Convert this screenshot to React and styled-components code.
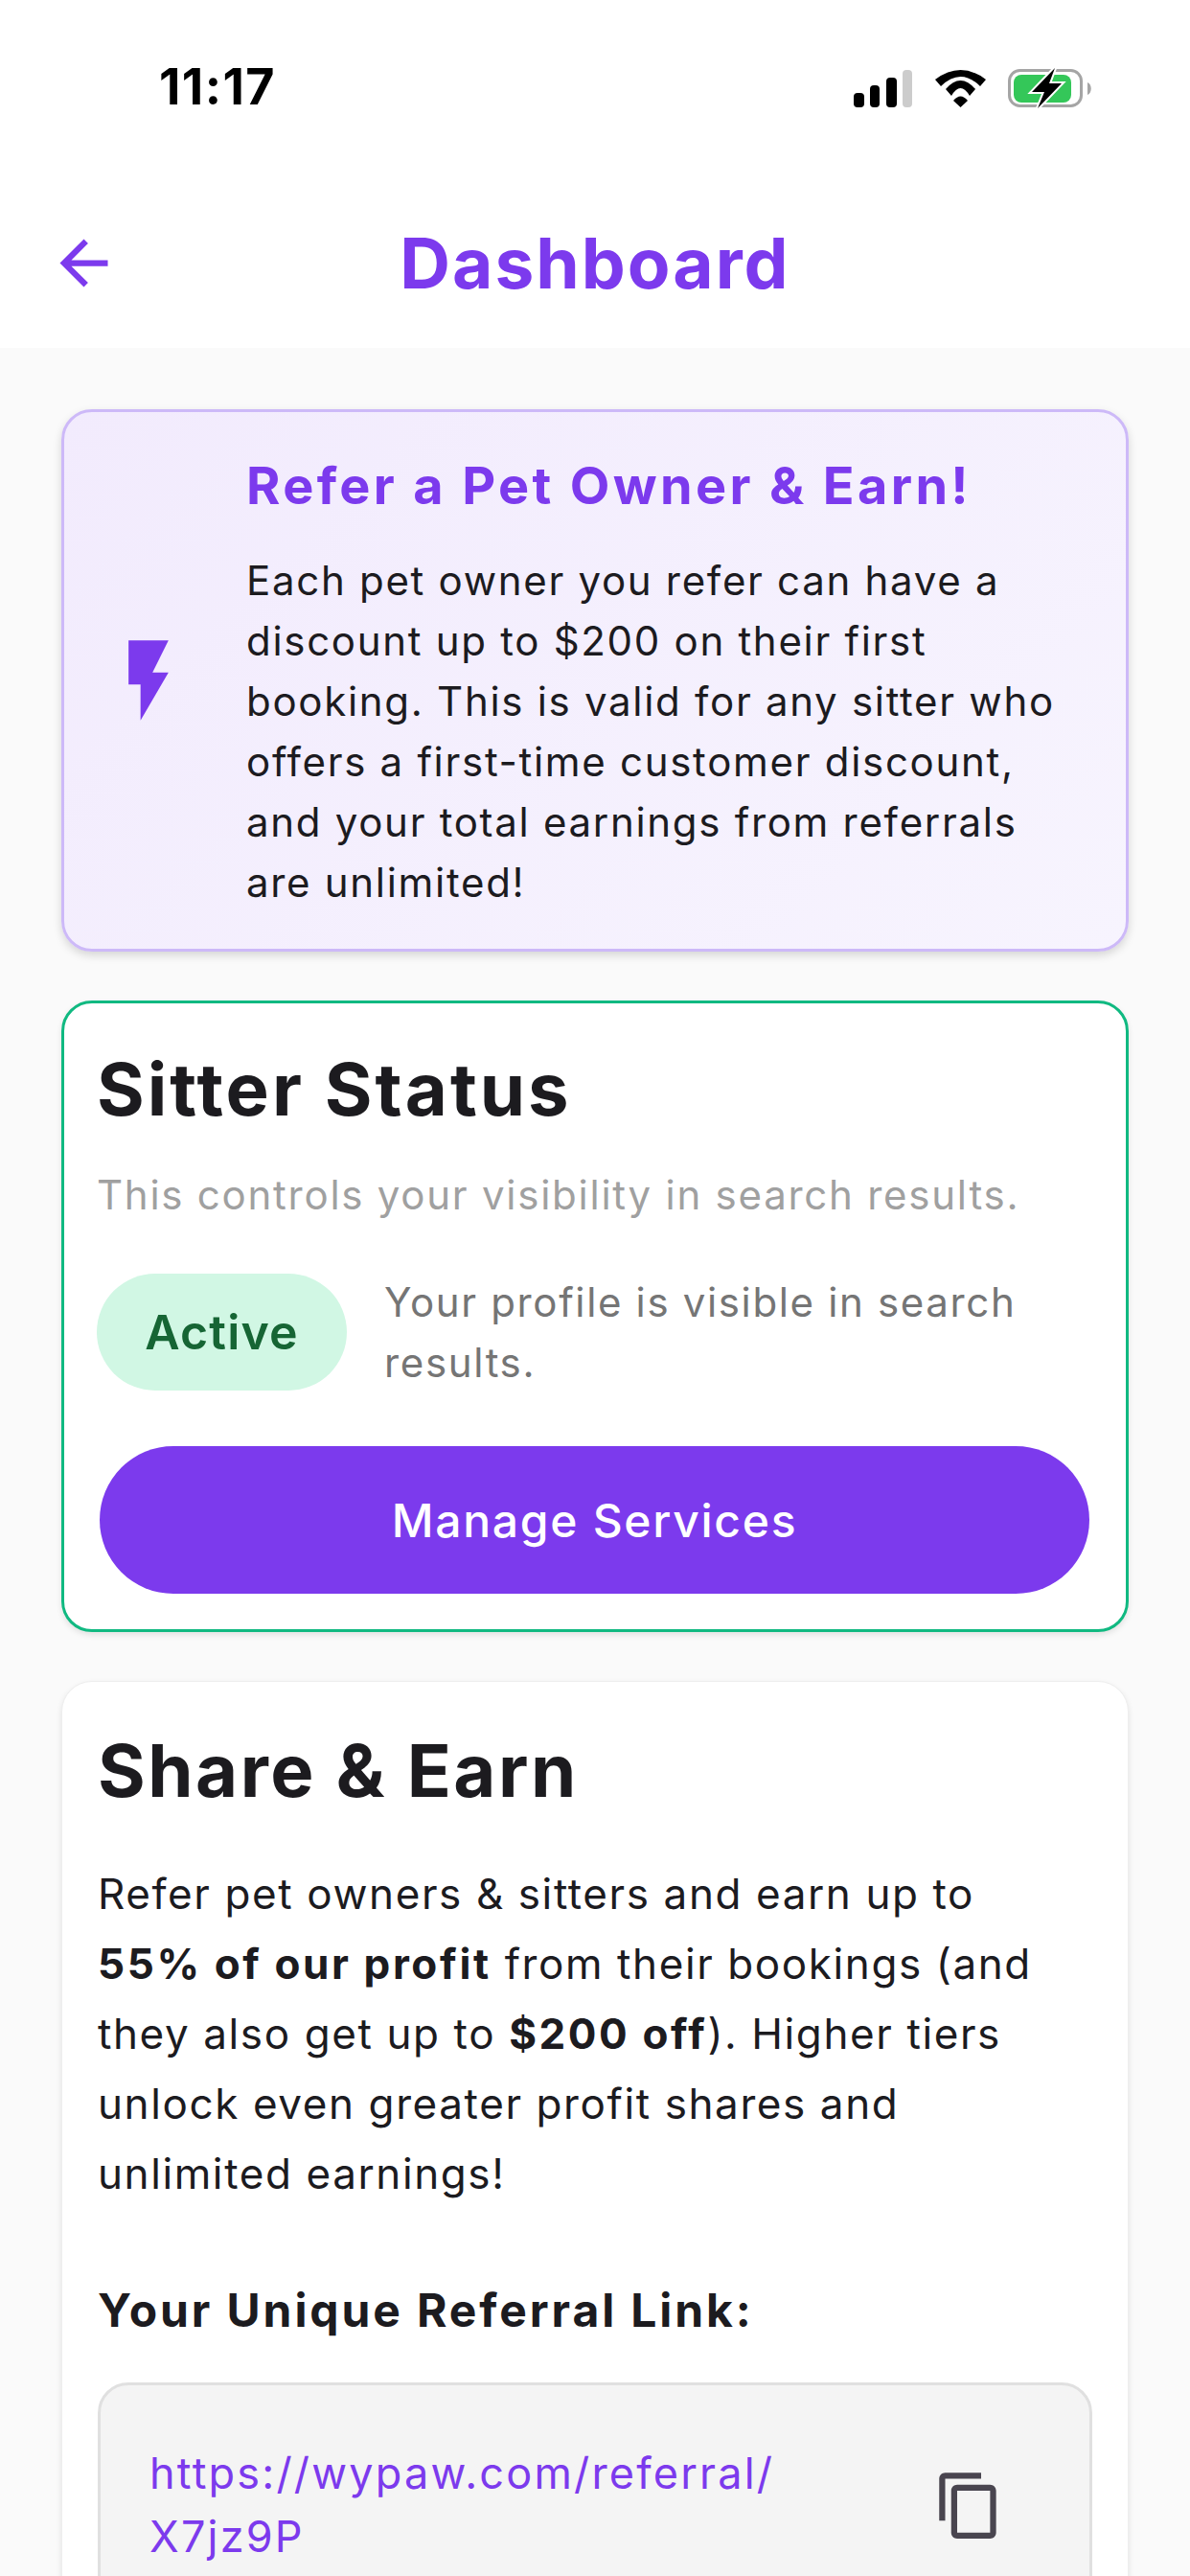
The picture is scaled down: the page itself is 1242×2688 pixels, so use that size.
import React from 'react'
import styled, { createGlobalStyle } from 'styled-components'
import { MdFlashOn, MdContentCopy, MdArrowBack } from 'react-icons/md'

const Global = createGlobalStyle`
  html, body {
    margin: 0;
    padding: 0;
    background: #fafafa;
  }
  * {
    box-sizing: border-box;
  }
`

const Page = styled.div`
  width: 1242px;
  height: 2688px;
  overflow: hidden;
  background: #fafafa;
  font-family: Inter, 'Liberation Sans', sans-serif;
  color: #1c1b1f;
`

const TopArea = styled.header`
  background: #fff;
  height: 363px;
  display: flex;
  flex-direction: column;
`

const StatusBar = styled.div`
  height: 190px;
  padding: 61px 101px 0 166px;
  display: flex;
  justify-content: space-between;
  align-items: flex-start;
`

const Clock = styled.span`
  font-size: 52px;
  font-weight: 700;
  line-height: 60px;
  color: #000;
  letter-spacing: 1.4px;
`

const StatusIcons = styled.svg`
  display: block;
  margin-top: 11px;
  overflow: visible;
`

const NavBar = styled.div`
  height: 173px;
  padding: 0 50px 4px;
  display: grid;
  grid-template-columns: 75px 1fr 75px;
  align-items: center;
  color: #7c3aed;
`

const Title = styled.h1`
  margin: 0;
  font-size: 73px;
  line-height: 88px;
  font-weight: 700;
  text-align: center;
  color: #7c3aed;
  letter-spacing: 2px;
`

const Content = styled.main`
  padding: 64px 64px 0;
  display: flex;
  flex-direction: column;
  gap: 51px;
`

const Banner = styled.section`
  height: 566px;
  border: 3px solid #cdb9f8;
  border-radius: 32px;
  background: linear-gradient(135deg, #f2ebfd, #f7f4fe);
  box-shadow: 0 4px 10px rgba(0, 0, 0, 0.15);
  display: flex;
  align-items: center;
  padding: 0 50px 0 38px;
  gap: 52px;
`

const BoltIcon = styled(MdFlashOn)`
  flex: none;
  color: #7c3aed;
`

const BannerText = styled.div`
  flex: 1;
  padding-top: 6px;
`

const BannerTitle = styled.h2`
  margin: 0 0 34px;
  font-size: 54px;
  line-height: 66px;
  font-weight: 700;
  color: #7c3aed;
  letter-spacing: 3.35px;
`

const BannerBody = styled.p`
  margin: 0;
  font-size: 42px;
  line-height: 63px;
  letter-spacing: 1.7px;
`

const Card = styled.section`
  background: #fff;
  border: ${p => (p.$active ? '3px solid #10b981' : '1px solid #eeeeee')};
  border-radius: 32px;
  box-shadow: 0 3px 6px rgba(0, 0, 0, 0.1);
  padding: ${p => (p.$active ? '43px 34px 37px' : '46px 37px 40px')};
`

const CardTitle = styled.h2`
  margin: 0;
  font-size: 76px;
  line-height: 92px;
  font-weight: 700;
  letter-spacing: ${p => (p.$wide ? '3px' : '2.5px')};
`

const Hint = styled.p`
  margin: 33px 0 0;
  font-size: 42px;
  line-height: 63px;
  color: #a0a0a0;
  letter-spacing: 1.75px;
`

const StatusRow = styled.div`
  margin-top: 49px;
  display: flex;
  align-items: center;
  gap: 39px;
`

const Pill = styled.div`
  flex: none;
  width: 261px;
  height: 122px;
  border-radius: 61px;
  background: #d1f7e4;
  color: #166534;
  font-size: 50px;
  font-weight: 600;
  letter-spacing: 1.2px;
  display: flex;
  align-items: center;
  justify-content: center;
`

const StatusNote = styled.p`
  margin: 0;
  font-size: 42px;
  line-height: 63px;
  color: #757575;
  letter-spacing: 1.65px;
`

const PrimaryButton = styled.button`
  display: block;
  width: 1033px;
  height: 154px;
  margin: 56px 0 0 3px;
  border: none;
  border-radius: 77px;
  background: #7c3aed;
  color: #fff;
  font-family: inherit;
  font-size: 48px;
  font-weight: 500;
  letter-spacing: 1.7px;
`

const Paragraph = styled.p`
  margin: 47px 0 0;
  max-width: 1000px;
  font-size: 44px;
  line-height: 73px;
  letter-spacing: 1.6px;

  b {
    font-weight: 700;
    letter-spacing: 2.6px;
  }
`

const Label = styled.h3`
  margin: 76px 0 0;
  font-size: 48px;
  line-height: 60px;
  font-weight: 700;
  letter-spacing: 2.9px;
`

const LinkBox = styled.div`
  margin-top: 45px;
  width: 1038px;
  border: 3px solid #e0e0e0;
  border-radius: 32px;
  background: #f4f4f4;
  padding: 59px 88px 59px 51px;
  display: flex;
  justify-content: space-between;
  align-items: center;
`

const LinkText = styled.span`
  font-size: 45px;
  line-height: 66px;
  color: #7c3aed;
  letter-spacing: 2.2px;
  width: 720px;
`

const CopyIcon = styled(MdContentCopy)`
  flex: none;
  color: #49454f;
`

function CellIcons() {
  return (
    <StatusIcons width="250" height="42" viewBox="0 0 250 42">
      <rect x="0" y="25" width="11" height="15" rx="4" fill="#000" />
      <rect x="17" y="17" width="10" height="23" rx="4" fill="#000" />
      <rect x="34" y="9" width="11" height="31" rx="4" fill="#000" />
      <rect x="51" y="1" width="10" height="39" rx="4" fill="#cccccc" />
      <path d="M85 11 Q111.5 -9 138 11 L132 18 Q111.5 -2 91 18 Z" fill="#000" />
      <path d="M96 21 Q111.5 3 127 21 L121 28 Q111.5 12 102 28 Z" fill="#000" />
      <path d="M104 33 Q111.5 24 119 33 L111.5 40 Z" fill="#000" />
      <rect
        x="162.5"
        y="1.5"
        width="75"
        height="37"
        rx="11"
        fill="none"
        stroke="#a5a5a5"
        strokeWidth="3"
      />
      <rect x="167" y="6" width="60" height="29" rx="8" fill="#34c759" />
      <path d="M244 14 C249 16 249 25 244 27 Z" fill="#a5a5a5" />
      <path
        d="M210 -1 L186 24 L199 24 L192 41 L217 15 L204 15 Z"
        fill="#000"
        stroke="#fff"
        strokeWidth="4"
        paintOrder="stroke"
      />
    </StatusIcons>
  )
}

export default function App() {
  return (
    <Page>
      <Global />
      <TopArea>
        <StatusBar>
          <Clock>11:17</Clock>
          <CellIcons />
        </StatusBar>
        <NavBar>
          <MdArrowBack size={75} />
          <Title>Dashboard</Title>
        </NavBar>
      </TopArea>
      <Content>
        <Banner>
          <BoltIcon size={100} />
          <BannerText>
            <BannerTitle>Refer a Pet Owner &amp; Earn!</BannerTitle>
            <BannerBody>
              Each pet owner you refer can have a discount up to $200 on their
              first booking. This is valid for any sitter who offers a
              first-time customer discount, and your total earnings from
              referrals are unlimited!
            </BannerBody>
          </BannerText>
        </Banner>
        <Card $active>
          <CardTitle $wide>Sitter Status</CardTitle>
          <Hint>This controls your visibility in search results.</Hint>
          <StatusRow>
            <Pill>Active</Pill>
            <StatusNote>Your profile is visible in search results.</StatusNote>
          </StatusRow>
          <PrimaryButton>Manage Services</PrimaryButton>
        </Card>
        <Card>
          <CardTitle>Share &amp; Earn</CardTitle>
          <Paragraph>
            Refer pet owners &amp; sitters and earn up to{' '}
            <b>55% of our profit</b> from their bookings (and they also get up
            to <b>$200 off</b>). Higher tiers unlock even greater profit shares
            and unlimited earnings!
          </Paragraph>
          <Label>Your Unique Referral Link:</Label>
          <LinkBox>
            <LinkText>
              https://wypaw.com/referral/
              <wbr />
              X7jz9P
            </LinkText>
            <CopyIcon size={75} />
          </LinkBox>
        </Card>
      </Content>
    </Page>
  )
}
